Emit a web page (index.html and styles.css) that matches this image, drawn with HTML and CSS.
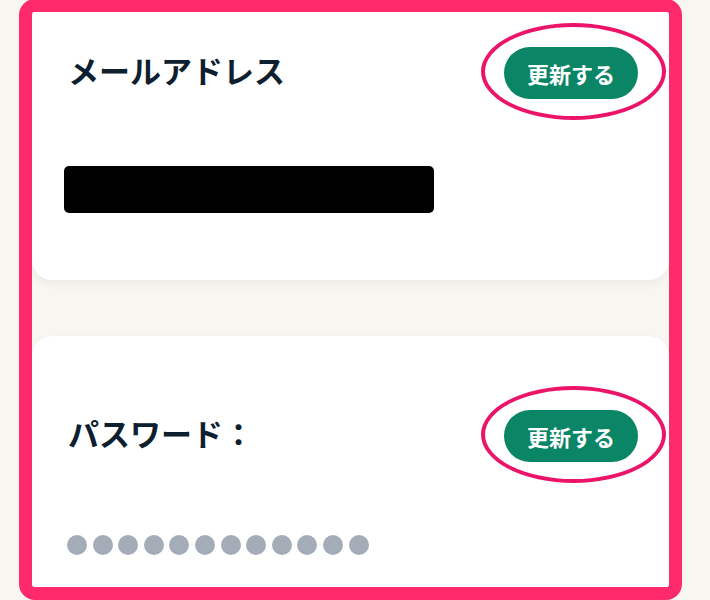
FILE: index.html
```html
<!DOCTYPE html>
<html lang="ja">
<head>
    <meta charset="UTF-8">
    <meta name="viewport" content="width=device-width, initial-scale=1.0">
    <title>アカウント設定</title>
    <link rel="stylesheet" href="styles.css">
</head>
<body>
    <div class="frame">
        <section class="card card-email">
            <div class="card-header">
                <h2 class="card-title">メールアドレス</h2>
                <div class="marked">
                    <button class="update-btn" type="button">更新する</button>
                </div>
            </div>
            <div class="redacted"></div>
        </section>

        <section class="card card-password">
            <div class="card-header">
                <h2 class="card-title">パスワード：</h2>
                <div class="marked">
                    <button class="update-btn" type="button">更新する</button>
                </div>
            </div>
            <div class="password-mask" aria-label="パスワード">
                <span></span><span></span><span></span><span></span>
                <span></span><span></span><span></span><span></span>
                <span></span><span></span><span></span><span></span>
            </div>
        </section>
    </div>
</body>
</html>
```

FILE: styles.css
```css
body {
    margin: 0;
    background-color: #f7f6f1;
    font-family: "Noto Sans CJK JP", "Noto Sans", sans-serif;
    overflow: hidden;
}

.frame {
    width: 637px;
    height: 575px;
    margin: -1px 0 0 19px;
    border: 13px solid #fe2a6b;
    border-radius: 16px;
    overflow: hidden;
}

.card {
    background-color: #fff;
    border-radius: 20px;
    box-shadow: 0 4px 10px rgba(0, 0, 0, 0.05);
    padding: 0 31px 0 36px;
}

.card-email {
    margin-top: -20px;
    padding-top: 55px;
    padding-bottom: 67px;
}

.card-password {
    margin-top: 56px;
    padding-top: 74px;
    padding-bottom: 60px;
}

.card-header {
    display: flex;
    justify-content: space-between;
    align-items: center;
}

.card-title {
    margin: 0 0 8px;
    font-size: 31px;
    font-weight: 700;
    color: #0e2030;
    line-height: 1;
}

.marked {
    position: relative;
}

/* hand-drawn style circle around the button */
.marked::after {
    content: "";
    position: absolute;
    top: -24px;
    left: -23px;
    right: -28px;
    bottom: -21px;
    border: 4px solid #ec1468;
    border-radius: 50%;
    pointer-events: none;
}

.update-btn {
    display: block;
    height: 52px;
    padding: 0 23px;
    background-color: #0a8566;
    color: #fff;
    border: none;
    border-radius: 26px;
    font-family: inherit;
    font-size: 22px;
    font-weight: 700;
    cursor: pointer;
}

.redacted {
    width: 370px;
    height: 47px;
    margin: 67px 0 0 -4px;
    background-color: #000;
    border-radius: 5px;
}

.password-mask {
    display: flex;
    gap: 5.6px;
    margin: 73px 0 0 -1px;
}

.password-mask span {
    width: 20px;
    height: 20px;
    border-radius: 50%;
    background-color: #a3acb7;
}
```
